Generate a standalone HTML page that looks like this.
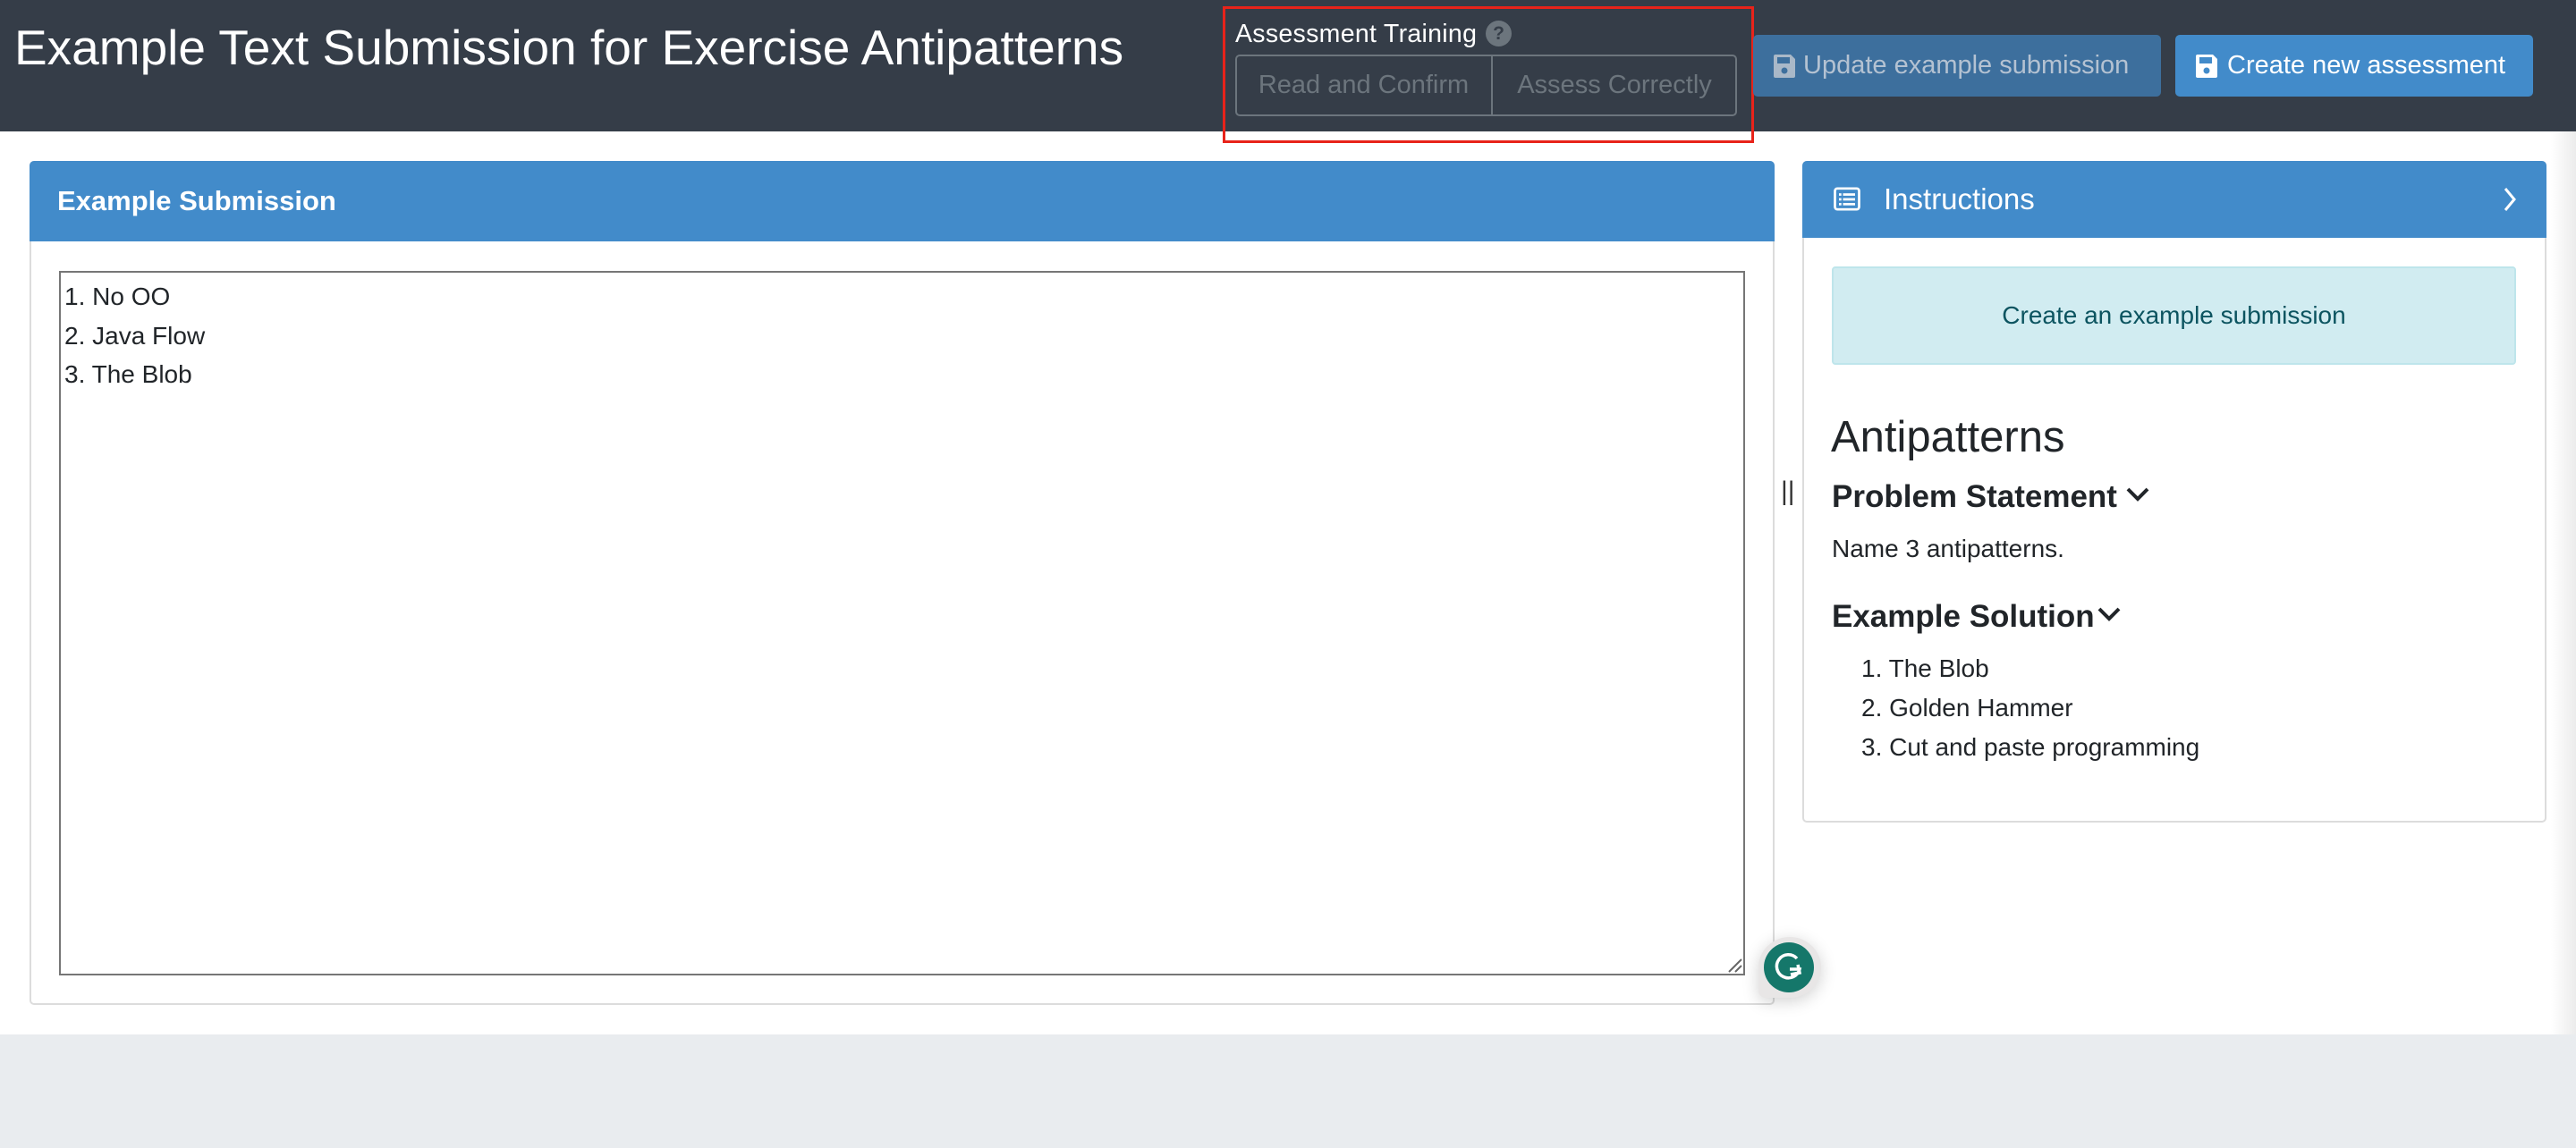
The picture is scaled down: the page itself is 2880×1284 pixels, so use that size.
<!DOCTYPE html>
<html><head><meta charset="utf-8"><style>
*{box-sizing:border-box;margin:0;padding:0}
body{width:2880px;height:1284px;overflow:hidden;background:#e9ecef;font-family:"Liberation Sans",Arial,sans-serif;color:#212529;position:relative}
.a{position:absolute}
.hdr{left:0;top:0;width:2880px;height:147px;background:#353d48}
.main{left:0;top:147px;width:2880px;height:1010px;background:#fff}
.t{white-space:nowrap}
</style></head><body>
<div class="a main"></div>
<div class="a" style="left:2852px;top:147px;width:28px;height:1010px;background:linear-gradient(to right,#fff,#ececec)"></div>
<div class="a hdr"></div>
<div class="a t" style="left:16px;top:20px;font-size:55px;color:#fff;line-height:66px">Example Text Submission for Exercise Antipatterns</div>

<div class="a" style="left:1367px;top:7px;width:594px;height:153px;border:3px solid #e8231a"></div>
<div class="a t" style="left:1381px;top:20px;font-size:28.5px;color:#fff;line-height:36px;letter-spacing:0.3px">Assessment Training</div>
<div class="a" style="left:1661px;top:23px;width:29px;height:29px;border-radius:50%;background:#6c757d;color:#353d48;font-size:21px;font-weight:bold;text-align:center;line-height:29px">?</div>
<div class="a" style="left:1381px;top:61px;width:561px;height:69px;border:2px solid #6c757d;border-radius:5px"></div>
<div class="a" style="left:1667px;top:61px;width:2px;height:69px;background:#6c757d"></div>
<div class="a t" style="left:1381px;top:61px;width:287px;height:69px;line-height:69px;text-align:center;font-size:29px;color:#6c757d">Read and Confirm</div>
<div class="a t" style="left:1668px;top:61px;width:274px;height:69px;line-height:69px;text-align:center;font-size:29px;color:#6c757d">Assess Correctly</div>

<div class="a" style="left:1960px;top:39px;width:456px;height:69px;background:#3d6f9d;border-radius:5px"></div>
<svg class="a" style="left:1983px;top:61px" width="24" height="26" viewBox="0 0 24 26"><path d="M2 0h17l5 5v19a2 2 0 0 1-2 2H2a2 2 0 0 1-2-2V2a2 2 0 0 1 2-2z" fill="#a9b8c8"/><rect x="4" y="3" width="14" height="7" fill="#3d6f9d"/><circle cx="12" cy="18" r="3.5" fill="#3d6f9d"/></svg>
<div class="a t" style="left:2016px;top:39px;line-height:69px;font-size:29px;color:#b4c2d2">Update example submission</div>
<div class="a" style="left:2432px;top:39px;width:400px;height:69px;background:#428bca;border-radius:5px"></div>
<svg class="a" style="left:2455px;top:61px" width="24" height="26" viewBox="0 0 24 26"><path d="M2 0h17l5 5v19a2 2 0 0 1-2 2H2a2 2 0 0 1-2-2V2a2 2 0 0 1 2-2z" fill="#fff"/><rect x="4" y="3" width="14" height="7" fill="#428bca"/><circle cx="12" cy="18" r="3.5" fill="#428bca"/></svg>
<div class="a t" style="left:2490px;top:39px;line-height:69px;font-size:29px;color:#fff">Create new assessment</div>

<!-- left card -->
<div class="a" style="left:33px;top:180px;width:1951px;height:944px;border:2px solid #dcdcdc;border-radius:5px;background:#fff"></div>
<div class="a" style="left:33px;top:180px;width:1951px;height:90px;background:#428bca;border-radius:5px 5px 0 0"></div>
<div class="a t" style="left:64px;top:180px;line-height:90px;font-size:31px;font-weight:bold;color:#fff">Example Submission</div>
<div class="a" style="left:66px;top:303px;width:1885px;height:788px;border:2px solid #767676"></div>
<div class="a" style="left:72px;top:310px;font-size:28px;line-height:43.5px;color:#212529">1. No OO<br>2. Java Flow<br>3. The Blob</div>
<svg class="a" style="left:1930px;top:1070px" width="18" height="18"><path d="M3 17L17 3M10 17L17 10" stroke="#666" stroke-width="2"/></svg>
<div class="a t" style="left:1991px;top:533px;font-size:30px;color:#333">||</div>

<!-- right card -->
<div class="a" style="left:2015px;top:180px;width:832px;height:740px;border:2px solid #dcdcdc;border-radius:5px;background:#fff"></div>
<div class="a" style="left:2015px;top:180px;width:832px;height:86px;background:#428bca;border-radius:5px 5px 0 0"></div>
<svg class="a" style="left:2049px;top:209px" width="32" height="27" viewBox="0 0 34 30"><rect x="2" y="2" width="30" height="26" rx="3" fill="none" stroke="#fff" stroke-width="3"/><g fill="#fff"><rect x="7" y="8" width="3" height="3"/><rect x="7" y="14" width="3" height="3"/><rect x="7" y="20" width="3" height="3"/><rect x="12" y="8" width="15" height="3"/><rect x="12" y="14" width="15" height="3"/><rect x="12" y="20" width="15" height="3"/></g></svg>
<div class="a t" style="left:2106px;top:180px;line-height:86px;font-size:33px;color:#fff">Instructions</div>
<svg class="a" style="left:2798px;top:208px" width="16" height="30"><path d="M3 3L13 15L3 27" fill="none" stroke="#fff" stroke-width="3"/></svg>
<div class="a" style="left:2048px;top:298px;width:765px;height:110px;background:#d1ecf1;border:2px solid #bee5eb;border-radius:4px;text-align:center;line-height:106px;font-size:28px;color:#0c5460">Create an example submission</div>
<div class="a t" style="left:2047px;top:460px;font-size:49px;line-height:58px">Antipatterns</div>
<div class="a t" style="left:2048px;top:534px;font-size:35px;line-height:44px;font-weight:bold">Problem Statement</div>
<svg class="a" style="left:2376px;top:543px" width="28" height="20"><path d="M3 4L14 15L25 4" fill="none" stroke="#212529" stroke-width="4"/></svg>
<div class="a t" style="left:2048px;top:597px;font-size:28px;line-height:34px">Name 3 antipatterns.</div>
<div class="a t" style="left:2048px;top:668px;font-size:35px;line-height:44px;font-weight:bold">Example Solution</div>
<svg class="a" style="left:2344px;top:677px" width="28" height="20"><path d="M3 4L14 15L25 4" fill="none" stroke="#212529" stroke-width="4"/></svg>
<div class="a" style="left:2081px;top:726px;font-size:28px;line-height:44px">1. The Blob<br>2. Golden Hammer<br>3. Cut and paste programming</div>

<!-- grammarly -->
<div class="a" style="left:1966px;top:1048px;width:70px;height:68px;border-radius:50% 50% 50% 8px;background:#e8e6e6;box-shadow:0 4px 18px rgba(0,0,0,.18)"></div>
<div class="a" style="left:1972px;top:1054px;width:56px;height:56px;border-radius:50%;background:#15776a"></div>
<svg class="a" style="left:1972px;top:1054px" width="56" height="56" viewBox="0 0 56 56"><path d="M37 18A13 13 0 1 0 40 30H29" fill="none" stroke="#fff" stroke-width="3.5"/><path d="M30 36L40 34L38 25" fill="none" stroke="#fff" stroke-width="3.5"/></svg>
</body></html>
